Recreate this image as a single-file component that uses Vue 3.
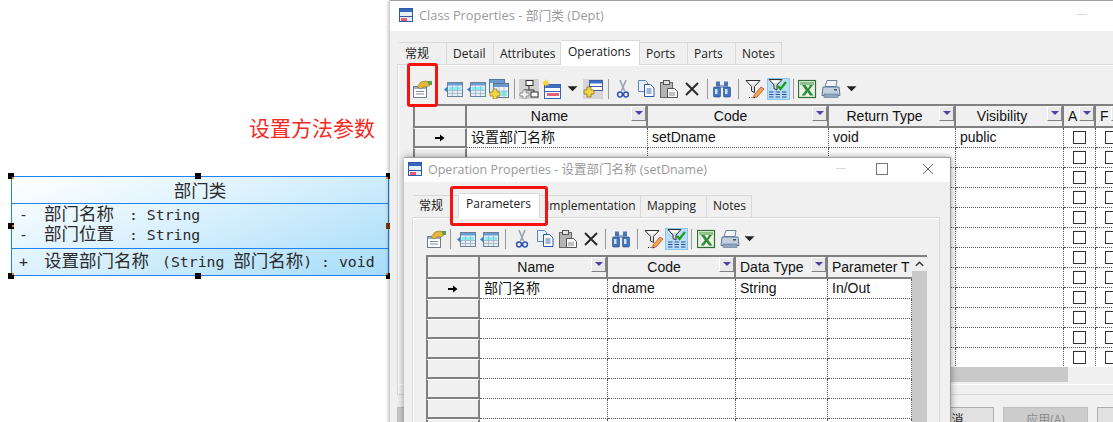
<template>
  <div class="page">
    <svg class="defs" aria-hidden="true">
      <defs>
        <symbol id="props" viewBox="0 0 20 20">
          <rect x="1.500" y="7.500" width="13" height="11" fill="#fff" stroke="#6a7f96" />
          <rect x="2" y="8" width="12" height="2" fill="#8fb2d8" />
          <path d="M4 12.500h8M4 15h8" stroke="#7c8ea0" />
          <path d="M5 8l4-5 5-1 3 1 1 3-3 2-4 0-2 2z" fill="#e6b53a" stroke="#8a6a20" stroke-width=".6" />
          <path d="M15 2h5v4h-3z" fill="#5a9a4a" />
        </symbol>
        <symbol id="addcol" viewBox="0 0 20 20">
          <path d="M1 10.500l3-2.500v5z" fill="#2a80dc" />
          <rect x="4.500" y="3.500" width="15" height="14" fill="#e4edf6" stroke="#6a8098" />
          <rect x="5" y="4" width="14" height="2.500" fill="#6c9bd2" />
          <rect x="6" y="8" width="12" height="3" fill="#86eef2" />
          <path d="M5 11.500h14M5 14.500h14M9.500 7v10M14.500 7v10" stroke="#9db0c2" stroke-width=".8" />
        </symbol>
        <symbol id="addcols" viewBox="0 0 20 20">
          <rect x=".5" y=".5" width="15" height="13" fill="#dfeaf5" stroke="#5b7590" />
          <rect x="1" y="1" width="14" height="3" fill="#6c9bd2" />
          <rect x="4.500" y="4.500" width="15" height="14" fill="#eef4fa" stroke="#5b7590" />
          <rect x="5" y="5" width="14" height="3" fill="#6c9bd2" />
          <rect x="12" y="12" width="6" height="5" fill="#86eef2" />
          <path d="M5 8v10M10 8v10M15 8v10M5 12h14" stroke="#9db0c2" stroke-width=".7" />
          <path d="M4 10h4v3h3v4H8v3H4v-3H1v-4h3z" fill="#f2d544" stroke="#8a7a20" stroke-width=".7" />
        </symbol>
        <symbol id="tree" viewBox="0 0 20 20">
          <rect x="0" y="0" width="20" height="20" fill="#d2d2d2" />
          <rect x="7" y="1.500" width="7" height="5" fill="#fff" stroke="#333" />
          <path d="M10 7v4M5 11h10M15 11v2" stroke="#333" fill="none" />
          <rect x="12" y="13" width="7" height="5" fill="#fff" stroke="#333" />
          <path d="M4 11h3v3h3v3H7v3H4v-3H1v-3h3z" fill="#f4f4f4" stroke="#777" stroke-width=".7" />
        </symbol>
        <symbol id="newtable" viewBox="0 0 20 20">
          <rect x="2.500" y="5.500" width="16" height="14" fill="#fff" stroke="#3b5fae" />
          <rect x="3" y="6" width="15" height="3" fill="#3f6fc0" />
          <path d="M3 12.500h15" stroke="#3b5fae" />
          <rect x="5" y="14" width="12" height="3" fill="#e8607a" />
          <path d="M3 0l1.200 2 2-1.200-.6 2.200 2.400.4-2 1.400 1 2-2.200-.8L3.600 8 3 5.800 1 6.800 1.800 4.800 0 3.500l2.200-.5z" fill="#f5d33c" />
        </symbol>
        <symbol id="pastetable" viewBox="0 0 20 20">
          <rect x="0" y="0" width="20" height="20" fill="#d6d6d6" />
          <rect x="6.500" y="1.500" width="13" height="10" fill="#fff" stroke="#3b5fae" />
          <rect x="7" y="2" width="12" height="2.500" fill="#3f6fc0" />
          <path d="M7 7.500h12" stroke="#3b5fae" />
          <path d="M4 8h4v3h3v4H8v3H4v-3H1v-4h3z" fill="#f2d544" stroke="#7a6a10" stroke-width=".7" />
        </symbol>
        <symbol id="cut" viewBox="0 0 20 20">
          <path d="M7 1l4.500 11M13 1L8.500 12" stroke="#9aa3ad" stroke-width="1.600" fill="none" />
          <circle cx="7" cy="15.500" r="2.400" fill="none" stroke="#2f55b8" stroke-width="1.500" />
          <circle cx="13" cy="15.500" r="2.400" fill="none" stroke="#2f55b8" stroke-width="1.500" />
        </symbol>
        <symbol id="copy" viewBox="0 0 20 20">
          <path d="M2.500 1.500h7l2 2v9h-9z" fill="#e6f0fb" stroke="#5b86c0" />
          <path d="M8.500 5.500h6l3.500 3.500v8.500H8.500z" fill="#fff" stroke="#2a55a8" />
          <path d="M10.500 10h5M10.500 12h5M10.500 14h5" stroke="#3a6bb8" />
        </symbol>
        <symbol id="paste" viewBox="0 0 20 20">
          <rect x="1.500" y="3.500" width="12" height="15" fill="#b4b4b4" stroke="#666" />
          <rect x="4.500" y="1.500" width="6" height="4" fill="#e2e2e2" stroke="#555" />
          <path d="M8.500 9.500h7l3 3v6h-10z" fill="#f6f6f6" stroke="#555" />
          <path d="M10 14h6M10 16h6" stroke="#888" />
        </symbol>
        <symbol id="del" viewBox="0 0 20 20">
          <path d="M4 4l12 12M16 4L4 16" stroke="#2b2b2b" stroke-width="2" fill="none" />
        </symbol>
        <symbol id="find" viewBox="0 0 20 20">
          <rect x="4" y="2.500" width="4" height="5" fill="#4f74b4" />
          <rect x="12" y="2.500" width="4" height="5" fill="#4f74b4" />
          <rect x="8" y="6" width="4" height="3" fill="#8fa6c8" />
          <rect x="1.500" y="8" width="7" height="10" rx="1" fill="#3f74c0" stroke="#26447e" stroke-width=".6" />
          <rect x="11.500" y="8" width="7" height="10" rx="1" fill="#3f74c0" stroke="#26447e" stroke-width=".6" />
          <rect x="3" y="10" width="2.500" height="5" fill="#cfe2f8" />
          <rect x="13" y="10" width="2.500" height="5" fill="#cfe2f8" />
        </symbol>
        <symbol id="filter" viewBox="0 0 20 20">
          <path d="M1 1.500h14l-5.500 6v6l-3-1.500V7.500z" fill="#e3e3e3" stroke="#333" />
          <path d="M3 2.500h10l-2 2H5z" fill="#fff" />
          <path d="M9 16l7-8 3 2-7 8-3.500 1z" fill="#f0a848" stroke="#b03838" stroke-width=".7" />
          <path d="M4 18.500h1M6.500 18.500h1M9 18.500h1" stroke="#222" />
        </symbol>
        <symbol id="filteron" viewBox="0 0 20 20">
          <path d="M1 .5h13l-5 5.500v5l-3-1.500V6z" fill="#d9d9d9" stroke="#333" />
          <path d="M3 1.500h9l-2 2H5z" fill="#fff" />
          <path d="M10 7l2.500 3L18 3" stroke="#12a012" stroke-width="2.200" fill="none" />
          <path d="M1 13h4.500M7.500 13h4.500M14 13h4.500M1 15.500h4.500M7.500 15.500h4.500M14 15.500h4.500M1 18h4.500M7.500 18h4.500M14 18h4.500" stroke="#2a4c96" stroke-width="1.200" />
        </symbol>
        <symbol id="excel" viewBox="0 0 20 20">
          <rect x=".5" y="1.500" width="17" height="17" fill="#e9f0e4" stroke="#2f6f33" stroke-width="1.200" />
          <rect x="2" y="3" width="14" height="3" fill="#8fc08a" />
          <path d="M4 6h3.500L10 9.500 12 6h3l-3.800 5 4.300 5.500h-3.500L9.500 13 7 16.500H3.600l4.200-5.300z" fill="#2e8b3a" />
        </symbol>
        <symbol id="print" viewBox="0 0 20 20">
          <path d="M6 1.500h10l-1 6H4z" fill="#f2f5f9" stroke="#6a82a0" />
          <path d="M2 8h16l1 8.500H1z" fill="#c2d0e0" stroke="#5d7694" />
          <rect x="3" y="15" width="14" height="3.500" fill="#8fa4bc" stroke="#5d7694" stroke-width=".6" />
          <rect x="13" y="10" width="3" height="1.500" fill="#3c5470" />
        </symbol>
        <symbol id="drop" viewBox="0 0 20 20">
          <path d="M4 7h11l-5.500 5.500z" fill="#222" />
        </symbol>
        <symbol id="winicon" viewBox="0 0 14 14">
          <rect x=".5" y=".5" width="13" height="13" fill="#e6eef8" stroke="#2f58a8" />
          <rect x="1" y="1" width="12" height="3" fill="#3568b8" />
          <path d="M1 8.500h12" stroke="#2f58a8" />
          <rect x="2" y="10" width="6" height="3" fill="#e65a74" />
        </symbol>
        <symbol id="rowarrow" viewBox="0 0 10 10">
          <path d="M0 4h5V1.500L9.500 5 5 8.500V6H0z" fill="#000" />
        </symbol>
      </defs>
    </svg>

    <p class="note">设置方法参数</p>

    <div class="uml">
      <span v-for="h in handles" :key="h" :class="['handle', `handle--${h}`]"></span>
      <div class="uml__title">部门类</div>
      <div class="uml__attrs">
        <div class="uml__line"><span class="uml__sign">-</span><b class="uml__name">部门名称</b>: String</div>
        <div class="uml__line"><span class="uml__sign">-</span><b class="uml__name">部门位置</b>: String</div>
      </div>
      <div class="uml__ops">
        <div class="uml__line"><span class="uml__sign">+</span><b class="uml__op">设置部门名称</b>(String <b>部门名称</b>) : void</div>
      </div>
    </div>

    <section class="win win--class">
      <header class="win__title">
        <svg class="win__icon"><use href="#winicon" /></svg>
        <span class="win__text">Class Properties - 部门类 (Dept)</span>
        <span class="win__min"></span>
        <span class="win__max"></span>
        <span class="win__close">
          <svg viewBox="0 0 10 10"><path d="M0 0l10 10M10 0L0 10" stroke="#666" fill="none" /></svg>
        </span>
      </header>
      <nav class="tabs">
        <span
          v-for="tab in classTabs"
          :key="tab.label"
          :class="['tab', { 'tab--on': tab.on }]"
          :style="{ width: tab.w + 'px' }"
        >{{ tab.label }}</span>
      </nav>
      <div class="panel">
        <div class="toolbar">
          <template v-for="(item, i) in classTools" :key="i">
            <span v-if="item === 'gap'" class="tool-gap"></span>
            <span v-else-if="item === 's'" class="sep"></span>
            <span v-else-if="item === 'S'" class="sep sep--wide"></span>
            <span v-else-if="item === 'drop'" class="tool tool--drop"><svg><use href="#drop" /></svg></span>
            <span v-else :class="['tool', { 'tool--on': item === 'filteron' }]"><svg><use :href="'#' + item" /></svg></span>
          </template>
        </div>
        <div class="sheet sheet--class">
          <div class="grid grid--class">
            <div class="hcell"></div>
            <div v-for="col in classCols" :key="col.label" :class="['hcell', { 'hcell--left': col.left }]">
              <span class="hcell__text">{{ col.label }}</span>
              <span class="sortbtn"></span>
            </div>
            <template v-for="r in 13" :key="r">
              <div class="rowhead">
                <svg v-if="r === 1" class="rowarrow"><use href="#rowarrow" /></svg>
              </div>
              <div class="cell">{{ r === 1 ? '设置部门名称' : '' }}</div>
              <div class="cell">{{ r === 1 ? 'setDname' : '' }}</div>
              <div class="cell">{{ r === 1 ? 'void' : '' }}</div>
              <div class="cell">{{ r === 1 ? 'public' : '' }}</div>
              <div class="cell cell--check"><span class="check"></span></div>
              <div class="cell cell--check"><span class="check"></span></div>
            </template>
          </div>
        </div>
        <div class="hscroll"><span class="hscroll__thumb"></span></div>
        <div class="panel__rule"></div>
      </div>
      <footer class="buttons">
        <span class="btn btn--off btn--first"></span>
        <span class="btn btn--cancel">取消</span>
        <span class="btn btn--off">应用(A)</span>
        <span class="btn"></span>
      </footer>
    </section>

    <section class="win win--op">
      <header class="win__title">
        <svg class="win__icon"><use href="#winicon" /></svg>
        <span class="win__text">Operation Properties - 设置部门名称 (setDname)</span>
        <span class="win__min"></span>
        <span class="win__max"></span>
        <span class="win__close">
          <svg viewBox="0 0 10 10"><path d="M0 0l10 10M10 0L0 10" stroke="#666" fill="none" /></svg>
        </span>
      </header>
      <nav class="tabs">
        <span
          v-for="tab in opTabs"
          :key="tab.label"
          :class="['tab', { 'tab--on': tab.on }]"
          :style="{ width: tab.w + 'px' }"
        >{{ tab.label }}</span>
      </nav>
      <div class="panel">
        <div class="toolbar">
          <template v-for="(item, i) in opTools" :key="i">
            <span v-if="item === 's'" class="sep"></span>
            <span v-else-if="item === 'S'" class="sep sep--wide"></span>
            <span v-else-if="item === 'drop'" class="tool tool--drop"><svg><use href="#drop" /></svg></span>
            <span v-else :class="['tool', { 'tool--on': item === 'filteron' }]"><svg><use :href="'#' + item" /></svg></span>
          </template>
        </div>
        <div class="sheet sheet--op">
          <div class="grid grid--op">
            <div class="hcell"></div>
            <div class="hcell"><span class="hcell__text">Name</span><span class="sortbtn"></span></div>
            <div class="hcell"><span class="hcell__text">Code</span><span class="sortbtn"></span></div>
            <div class="hcell hcell--left"><span class="hcell__text">Data Type</span><span class="sortbtn"></span></div>
            <div class="hcell hcell--left hcell--clip"><span class="hcell__text">Parameter T</span></div>
            <template v-for="r in 8" :key="r">
              <div class="rowhead">
                <svg v-if="r === 1" class="rowarrow"><use href="#rowarrow" /></svg>
              </div>
              <div class="cell">{{ r === 1 ? '部门名称' : '' }}</div>
              <div class="cell">{{ r === 1 ? 'dname' : '' }}</div>
              <div class="cell">{{ r === 1 ? 'String' : '' }}</div>
              <div class="cell">{{ r === 1 ? 'In/Out' : '' }}</div>
            </template>
          </div>
          <div class="vscroll">
            <span class="vscroll__up">
              <svg viewBox="0 0 10 6"><path d="M1 5l4-4 4 4" stroke="#333" stroke-width="1.600" fill="none" /></svg>
            </span>
            <span class="vscroll__thumb"></span>
          </div>
        </div>
      </div>
    </section>

    <div class="mark mark--tool"></div>
    <div class="mark mark--tab"></div>
  </div>
</template>

<script setup>
const handles = ['tl', 'tm', 'tr', 'ml', 'mr', 'bl', 'bm', 'br']

const classTabs = [
  { label: '常规', w: 48 },
  { label: 'Detail', w: 47 },
  { label: 'Attributes', w: 67 },
  { label: 'Operations', w: 79, on: true },
  { label: 'Ports', w: 48 },
  { label: 'Parts', w: 48 },
  { label: 'Notes', w: 46 },
]

const opTabs = [
  { label: '常规', w: 46 },
  { label: 'Parameters', w: 81, on: true },
  { label: 'Implementation', w: 101 },
  { label: 'Mapping', w: 66 },
  { label: 'Notes', w: 45 },
]

const classTools = [
  'props', 'gap', 'addcol', 'addcol', 'addcols', 's',
  'tree', 'newtable', 'drop', 'pastetable', 's',
  'cut', 'copy', 'paste', 'del', 's',
  'find', 'S', 'filter', 'filteron', 's',
  'excel', 'print', 'drop',
]

const opTools = [
  'props', 's', 'addcol', 'addcol', 'S',
  'cut', 'copy', 'paste', 'del', 's',
  'find', 'S', 'filter', 'filteron', 's',
  'excel', 'print', 'drop',
]

const classCols = [
  { label: 'Name' },
  { label: 'Code' },
  { label: 'Return Type' },
  { label: 'Visibility' },
  { label: 'A', left: true },
  { label: 'F', left: true },
]
</script>

<style scoped>
.page {
  position: relative;
  width: 1113px;
  height: 422px;
  overflow: hidden;
  background: #fff;
  font-family: "Liberation Sans", "Noto Sans CJK SC", sans-serif;
}

.defs {
  position: absolute;
  width: 0;
  height: 0;
}

.note {
  position: absolute;
  left: 249px;
  top: 115px;
  margin: 0;
  font-size: 21px;
  line-height: 28px;
  color: #f42a22;
}

/* class shape on the diagram */
.uml {
  position: absolute;
  left: 11px;
  top: 176px;
  width: 378px;
  height: 100px;
  box-sizing: border-box;
  border: 1px solid #1b82f0;
  background: linear-gradient(160deg, #ffffff 0%, #dff3fe 40%, #a6dcf8 100%);
  color: #2b2b2b;
  font-family: "DejaVu Sans Mono", "Noto Sans CJK SC", monospace;
  font-size: 14.8px;
}

.uml b {
  font-weight: 400;
  font-size: 17.5px;
  font-family: "Noto Sans CJK SC", sans-serif;
}

.uml__sign {
  display: inline-block;
  width: 25px;
}

.uml__name {
  margin-right: 15px;
}

.uml__op {
  margin-right: 13px;
}

.uml__title {
  height: 26px;
  line-height: 25px;
  text-align: center;
  font-size: 17.5px;
  font-family: "Noto Sans CJK SC", sans-serif;
  border-bottom: 1px solid #1b82f0;
}

.uml__attrs {
  height: 45px;
  box-sizing: border-box;
  padding-left: 7px;
  border-bottom: 1px solid #1b82f0;
}

.uml__attrs .uml__line {
  line-height: 18px;
}

.uml__ops {
  padding: 1px 0 0 7px;
}

.uml__line {
  height: 20px;
  line-height: 20px;
  white-space: pre;
}

.handle {
  position: absolute;
  width: 6px;
  height: 6px;
  background: #000;
}

.handle::after {
  content: "";
  position: absolute;
  width: 2px;
  height: 2px;
  background: #e8781a;
}

.handle--tl { left: -4px; top: -4px; }
.handle--tl::after { right: 0; bottom: 0; }
.handle--tm { left: 183px; top: -4px; }
.handle--tm::after { display: none; }
.handle--tr { right: -4px; top: -4px; }
.handle--tr::after { left: 0; bottom: 0; }
.handle--ml { left: -4px; top: 46px; }
.handle--ml::after { right: 0; top: 2px; }
.handle--mr { right: -4px; top: 46px; background: #7a3b00; }
.handle--mr::after { display: none; }
.handle--bl { left: -4px; bottom: -4px; }
.handle--bl::after { right: 0; top: 0; }
.handle--bm { left: 183px; bottom: -4px; }
.handle--bm::after { display: none; }
.handle--br { right: -4px; bottom: -4px; }
.handle--br::after { left: 0; top: 0; }

/* property windows */
.win {
  position: absolute;
  display: flex;
  flex-direction: column;
  box-sizing: border-box;
  background: #f0f0f0;
  font-family: "Open Sans", "Noto Sans CJK SC", sans-serif;
  font-size: 12px;
  color: #222;
}

.win--class {
  left: 390px;
  top: 0;
  width: 801px;
  height: 440px;
  border-top: 1px solid #a0a0a0;
  box-shadow: -2px 0 3px rgba(0, 0, 0, 0.22);
}

.win--op {
  left: 404px;
  top: 157px;
  width: 547px;
  height: 290px;
  border-top: 1px solid #a0a0a0;
  border-right: 1px solid #9a9a9a;
  box-shadow: 0 0 7px rgba(0, 0, 0, 0.4);
}

.win__title {
  display: flex;
  align-items: center;
  flex: none;
  box-sizing: border-box;
  height: 30px;
  padding: 0 0 3px 9px;
  background: #fff;
}

.win--op .win__title {
  height: 24px;
  padding-left: 4px;
}

.win__icon {
  width: 14px;
  height: 14px;
  margin-right: 6px;
}

.win__text {
  color: #9a9a9a;
  font-size: 12.8px;
}

.win--op .win__text {
  font-size: 12.5px;
}

.win__min {
  width: 10px;
  height: 1px;
  margin-left: auto;
  background: #d8d8d8;
}

.win__max {
  width: 10px;
  height: 10px;
  margin-left: 30px;
  border: 1px solid #777;
}

.win__close {
  width: 10px;
  height: 10px;
  margin: 0 17px 0 35px;
}

.win__close svg {
  display: block;
  width: 10px;
  height: 10px;
}

.tabs {
  display: flex;
  align-items: flex-end;
  flex: none;
  height: 33px;
  padding-left: 9px;
}

.win--op .tabs {
  height: 35px;
  padding-left: 9px;
}

.win--op .tab {
  line-height: 20px;
}

.tab {
  box-sizing: border-box;
  height: 22px;
  line-height: 22px;
  padding-left: 6px;
  margin-bottom: 0;
  border: 1px solid #d9d9d9;
  border-bottom: 0;
  border-left: 0;
  white-space: nowrap;
  overflow: hidden;
}

.tab--on {
  height: 25px;
  line-height: 22px;
  margin-bottom: -1px;
  padding-left: 7px;
  background: #fff;
  position: relative;
  z-index: 1;
}

.panel {
  display: flex;
  flex-direction: column;
  flex: none;
  height: 331px;
  margin: 0 10px 0 7px;
  box-sizing: border-box;
  border: 1px solid #d9d9d9;
  box-shadow: inset 1px 1px 0 #fff;
}

.win--op .panel {
  height: 240px;
  margin-left: 8px;
}

.toolbar {
  display: flex;
  align-items: center;
  flex: none;
  height: 31px;
  margin-top: 8px;
  padding-left: 12.5px;
}

.win--op .toolbar {
  height: 33px;
  margin-top: 4px;
  padding-left: 11px;
}

.tool {
  display: flex;
  align-items: center;
  justify-content: center;
  flex: none;
  width: 23px;
  height: 22px;
  box-sizing: border-box;
}

.tool svg {
  width: 20px;
  height: 20px;
}

.tool--on {
  background: #b9dcf8;
  border: 1px solid #8cc4f0;
}

.tool--drop {
  width: 18px;
}

.tool-gap {
  flex: none;
  width: 8px;
}

.sep {
  flex: none;
  width: 7px;
  height: 20px;
  background: linear-gradient(#9a9a9a, #9a9a9a) center / 1px 100% no-repeat;
}

.sep--wide {
  width: 10px;
}

.sheet {
  display: flex;
  flex: none;
  margin-left: 15px;
  overflow: hidden;
}

.sheet--class {
  height: 263px;
}

.sheet--op {
  height: 190px;
  margin-left: 13px;
}

.grid {
  display: grid;
  flex: none;
  grid-auto-rows: 20px;
  grid-template-rows: 24px;
  font-family: "Liberation Sans", "Noto Sans CJK SC", sans-serif;
  font-size: 14px;
  background: #fff;
}

.grid--class {
  grid-template-columns: 54px 181px 181px 127px 108px 32px 32px;
}

.grid--op {
  grid-template-columns: 54px 128px 128px 92px 84px;
}

.hcell {
  position: relative;
  display: flex;
  align-items: center;
  justify-content: center;
  box-sizing: border-box;
  padding-right: 14px;
  background: #f0f0f0;
  border-top: 2px solid #808080;
  border-bottom: 2px solid #808080;
  border-right: 2px solid #808080;
  overflow: hidden;
  white-space: nowrap;
  color: #111;
}

.hcell:first-child {
  border-left: 2px solid #808080;
}

.hcell--left {
  justify-content: flex-start;
  padding-left: 4px;
}

.hcell--clip {
  padding-right: 0;
  border-right: 0;
}

.hcell__text {
  flex: none;
}

.sortbtn {
  position: absolute;
  right: 0;
  top: 0;
  width: 15px;
  height: 15px;
  box-sizing: border-box;
  border: 1px solid;
  border-color: #fff #808080 #808080 #fff;
  background: #e9e9e9;
}

.sortbtn::after {
  content: "";
  position: absolute;
  left: 3px;
  top: 4px;
  border: 4px solid transparent;
  border-top: 4px solid #4c43a8;
  border-bottom: 0;
}

.rowhead {
  display: flex;
  align-items: center;
  justify-content: center;
  box-sizing: border-box;
  background: #f0f0f0;
  border: 2px solid #808080;
  border-top: 1px solid #fff;
}

.rowarrow {
  width: 10px;
  height: 10px;
}

.cell {
  box-sizing: border-box;
  padding-left: 4px;
  line-height: 19px;
  white-space: nowrap;
  overflow: hidden;
  color: #111;
  border-right: 1px dotted #555;
  border-bottom: 1px dotted #555;
}

.cell--check {
  display: flex;
  align-items: center;
  justify-content: center;
  padding: 0;
}

.check {
  width: 13px;
  height: 13px;
  box-sizing: border-box;
  border: 1px solid #333;
  background: #fff;
}

.hscroll {
  flex: none;
  height: 15px;
  margin-left: 15px;
  background: #f0f0f0;
}

.hscroll__thumb {
  display: block;
  width: 655px;
  height: 15px;
  background: #c9c9c9;
}

.panel__rule {
  flex: none;
  height: 1px;
  margin-top: 2px;
  background: #fff;
}

.buttons {
  display: flex;
  flex: none;
  gap: 9px;
  margin-top: 12px;
  padding-left: 7px;
}

.btn {
  flex: none;
  width: 85px;
  height: 24px;
  line-height: 23px;
  box-sizing: border-box;
  text-align: center;
  background: #e1e1e1;
  border: 1px solid #adadad;
}

.btn--first {
  width: 60px;
  margin-right: 443px;
}

.btn--off {
  background: #cccccc;
  border-color: #bfbfbf;
  color: #8a8a8a;
}

.vscroll {
  display: flex;
  flex-direction: column;
  flex: none;
  width: 15px;
  background: #f0f0f0;
  border-top: 2px solid #808080;
}

.vscroll__up {
  flex: none;
  height: 14px;
  padding: 4px 3px 0;
  box-sizing: border-box;
}

.vscroll__up svg {
  display: block;
  width: 9px;
  height: 6px;
}

.vscroll__thumb {
  flex: 1;
  background: #c9c9c9;
}

/* red callouts drawn over the screenshot */
.mark {
  position: absolute;
  box-sizing: border-box;
  border: 3px solid #f5120f;
  border-radius: 3px;
}

.mark--tool {
  left: 407px;
  top: 63px;
  width: 31px;
  height: 44px;
}

.mark--tab {
  left: 450px;
  top: 186px;
  width: 98px;
  height: 40px;
}
</style>
